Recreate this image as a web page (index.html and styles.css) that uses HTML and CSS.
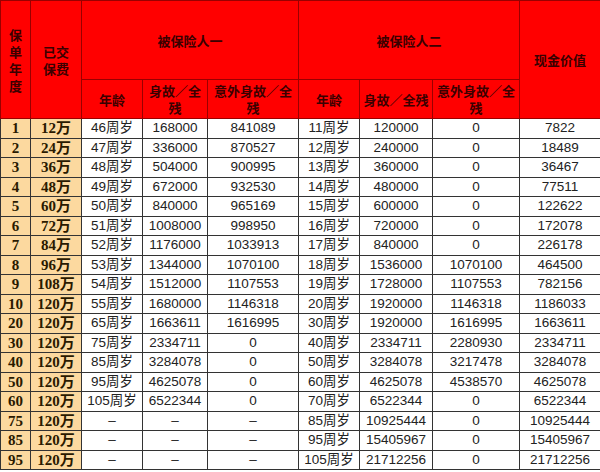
FILE: index.html
```html
<!DOCTYPE html>
<html lang="zh">
<head>
<meta charset="utf-8">
<link rel="stylesheet" href="styles.css">
</head>
<body>
<table class="grid">
  <colgroup>
    <col class="c1"><col class="c2"><col class="c3"><col class="c4"><col class="c5"><col class="c6"><col class="c7"><col class="c8"><col class="c9">
  </colgroup>
  <thead>
    <tr class="h1">
      <th rowspan="2">保<br>单<br>年<br>度</th>
      <th rowspan="2">已交<br>保费</th>
      <th colspan="3">被保险人一</th>
      <th colspan="3">被保险人二</th>
      <th rowspan="2">现金价值</th>
    </tr>
    <tr class="h2">
      <th>年龄</th>
      <th>身故／全<br>残</th>
      <th>意外身故／全<br>残</th>
      <th>年龄</th>
      <th>身故／全残</th>
      <th>意外身故／全<br>残</th>
    </tr>
  </thead>
  <tbody>
    <tr><td class="k">1</td><td class="k">12万</td><td>46周岁</td><td>168000</td><td>841089</td><td>11周岁</td><td>120000</td><td>0</td><td>7822</td></tr>
    <tr><td class="k">2</td><td class="k">24万</td><td>47周岁</td><td>336000</td><td>870527</td><td>12周岁</td><td>240000</td><td>0</td><td>18489</td></tr>
    <tr><td class="k">3</td><td class="k">36万</td><td>48周岁</td><td>504000</td><td>900995</td><td>13周岁</td><td>360000</td><td>0</td><td>36467</td></tr>
    <tr><td class="k">4</td><td class="k">48万</td><td>49周岁</td><td>672000</td><td>932530</td><td>14周岁</td><td>480000</td><td>0</td><td>77511</td></tr>
    <tr><td class="k">5</td><td class="k">60万</td><td>50周岁</td><td>840000</td><td>965169</td><td>15周岁</td><td>600000</td><td>0</td><td>122622</td></tr>
    <tr><td class="k">6</td><td class="k">72万</td><td>51周岁</td><td>1008000</td><td>998950</td><td>16周岁</td><td>720000</td><td>0</td><td>172078</td></tr>
    <tr><td class="k">7</td><td class="k">84万</td><td>52周岁</td><td>1176000</td><td>1033913</td><td>17周岁</td><td>840000</td><td>0</td><td>226178</td></tr>
    <tr><td class="k">8</td><td class="k">96万</td><td>53周岁</td><td>1344000</td><td>1070100</td><td>18周岁</td><td>1536000</td><td>1070100</td><td>464500</td></tr>
    <tr><td class="k">9</td><td class="k">108万</td><td>54周岁</td><td>1512000</td><td>1107553</td><td>19周岁</td><td>1728000</td><td>1107553</td><td>782156</td></tr>
    <tr><td class="k">10</td><td class="k">120万</td><td>55周岁</td><td>1680000</td><td>1146318</td><td>20周岁</td><td>1920000</td><td>1146318</td><td>1186033</td></tr>
    <tr><td class="k">20</td><td class="k">120万</td><td>65周岁</td><td>1663611</td><td>1616995</td><td>30周岁</td><td>1920000</td><td>1616995</td><td>1663611</td></tr>
    <tr><td class="k">30</td><td class="k">120万</td><td>75周岁</td><td>2334711</td><td>0</td><td>40周岁</td><td>2334711</td><td>2280930</td><td>2334711</td></tr>
    <tr><td class="k">40</td><td class="k">120万</td><td>85周岁</td><td>3284078</td><td>0</td><td>50周岁</td><td>3284078</td><td>3217478</td><td>3284078</td></tr>
    <tr><td class="k">50</td><td class="k">120万</td><td>95周岁</td><td>4625078</td><td>0</td><td>60周岁</td><td>4625078</td><td>4538570</td><td>4625078</td></tr>
    <tr><td class="k">60</td><td class="k">120万</td><td>105周岁</td><td>6522344</td><td>0</td><td>70周岁</td><td>6522344</td><td>0</td><td>6522344</td></tr>
    <tr><td class="k">75</td><td class="k">120万</td><td>–</td><td>–</td><td>–</td><td>85周岁</td><td>10925444</td><td>0</td><td>10925444</td></tr>
    <tr><td class="k">85</td><td class="k">120万</td><td>–</td><td>–</td><td>–</td><td>95周岁</td><td>15405967</td><td>0</td><td>15405967</td></tr>
    <tr><td class="k">95</td><td class="k">120万</td><td>–</td><td>–</td><td>–</td><td>105周岁</td><td>21712256</td><td>0</td><td>21712256</td></tr>
  </tbody>
</table>
</body>
</html>
```
FILE: styles.css
```css
html, body {
  margin: 0;
  padding: 0;
  background: #ffffff;
}
.grid {
  width: 600px;
  table-layout: fixed;
  border-collapse: collapse;
  font-family: "Liberation Sans", "Noto Sans CJK SC", sans-serif;
  font-size: 13.5px;
  color: #222222;
}
.c1 { width: 30px; }
.c2 { width: 51px; }
.c3 { width: 61px; }
.c4 { width: 65px; }
.c5 { width: 91px; }
.c6 { width: 61px; }
.c7 { width: 73px; }
.c8 { width: 87px; }
.c9 { width: 81px; }
.grid th {
  background: #ff0000;
  color: #3a0000;
  font-family: "Noto Sans CJK SC", sans-serif;
  font-weight: 700;
  font-size: 13px;
  line-height: 17px;
  border: 1px solid #9a0000;
  padding: 0;
  text-align: center;
  vertical-align: middle;
}
.grid thead tr:first-child th:first-child,
.grid thead tr:first-child th:nth-child(2) {
  font-weight: 700;
}
.h1 th { height: 78px; }
.h2 th { height: 38px; }
.grid td {
  height: 18.5px;
  padding: 0;
  border: 1px solid #333333;
  text-align: center;
  vertical-align: middle;
  line-height: 18px;
  white-space: nowrap;
}
.grid td.k {
  background: #fcd99f;
  font-family: "Liberation Serif", "Noto Sans CJK SC", serif;
  font-weight: 700;
  font-size: 15px;
  color: #2a1a00;
}
```
